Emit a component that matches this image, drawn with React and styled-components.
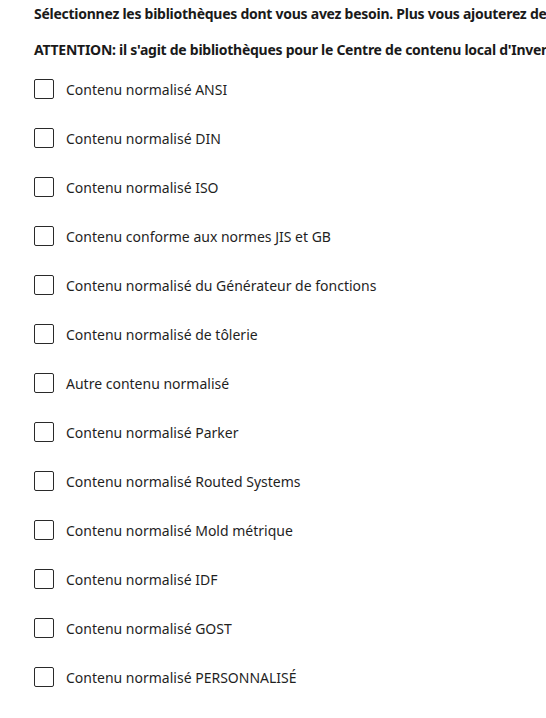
import React from "react"
import styled, { createGlobalStyle } from "styled-components"

const GlobalStyle = createGlobalStyle`
  html, body {
    margin: 0;
    padding: 0;
    background: #ffffff;
  }
  body {
    font-family: "Noto Sans", "Open Sans", sans-serif;
    color: #1a1a1a;
  }
`

const libraries = [
  "Contenu normalisé ANSI",
  "Contenu normalisé DIN",
  "Contenu normalisé ISO",
  "Contenu conforme aux normes JIS et GB",
  "Contenu normalisé du Générateur de fonctions",
  "Contenu normalisé de tôlerie",
  "Autre contenu normalisé",
  "Contenu normalisé Parker",
  "Contenu normalisé Routed Systems",
  "Contenu normalisé Mold métrique",
  "Contenu normalisé IDF",
  "Contenu normalisé GOST",
  "Contenu normalisé PERSONNALISÉ",
]

const App = () => {
  return (
    <>
      <GlobalStyle />
      <Wrapper>
        <Notice>
          Sélectionnez les bibliothèques dont vous avez besoin. Plus vous ajouterez de bibliothèques, plus l'installation sera longue.
        </Notice>
        <Notice>
          ATTENTION: il s'agit de bibliothèques pour le Centre de contenu local d'Inventor uniquement.
        </Notice>
        <List>
          {libraries.map((lib) => (
            <Row key={lib}>
              <Box type='checkbox' />
              <Label>{lib}</Label>
            </Row>
          ))}
        </List>
      </Wrapper>
    </>
  )
}

const Wrapper = styled.main`
  width: 546px;
  height: 718px;
  overflow: hidden;
  padding-left: 34px;
  box-sizing: border-box;
`

const Notice = styled.p`
  margin: 0;
  height: 36px;
  line-height: 28px;
  font-size: 14px;
  font-weight: 700;
  letter-spacing: -0.26px;
  white-space: nowrap;
  color: #1a1a1a;
`

const List = styled.div`
  display: flex;
  flex-direction: column;
  gap: 29px;
  padding-top: 7px;
`

const Row = styled.label`
  display: flex;
  align-items: center;
  gap: 12px;
  height: 20px;
`

const Box = styled.input`
  appearance: none;
  margin: 0;
  width: 20px;
  height: 20px;
  border: 1.5px solid #2a2a2a;
  border-radius: 2px;
  background: #ffffff;
  box-sizing: border-box;
`

const Label = styled.span`
  font-size: 14px;
  color: #1f1f1f;
`

export default App
